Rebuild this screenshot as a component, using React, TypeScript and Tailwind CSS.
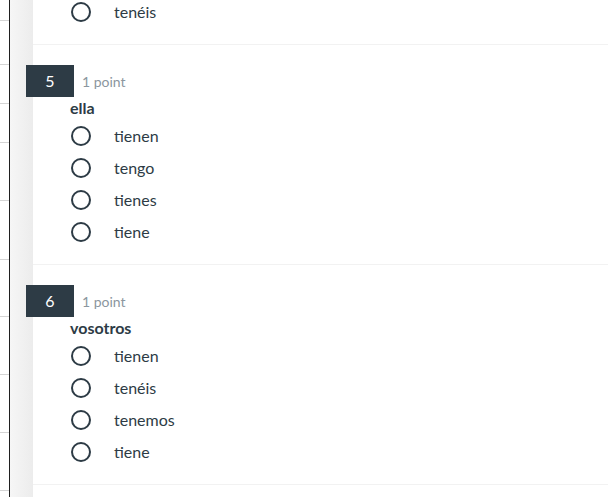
import React from 'react';

interface Question {
  num: number;
  title: string;
  options: string[];
}

const questions: Question[] = [
  { num: 5, title: 'ella', options: ['tienen', 'tengo', 'tienes', 'tiene'] },
  { num: 6, title: 'vosotros', options: ['tienen', 'tenéis', 'tenemos', 'tiene'] },
];

function Option({ label }: { label: string }) {
  return (
    <div className="flex h-8 items-center pl-[38px]">
      <span className="h-5 w-5 rounded-full border-2 border-[#2d3b45]"></span>
      <span className="ml-[23px] text-[16px] text-[#2d3b45]">{label}</span>
    </div>
  );
}

function QuestionBlock({ q }: { q: Question }) {
  return (
    <div className="border-b border-[#f2f2f2] pt-[20px] pb-4">
      <div className="flex items-center">
        <div className="-ml-[7px] flex h-8 w-12 items-center justify-center bg-[#2d3b45] text-[16px] text-white">
          {q.num}
        </div>
        <span className="ml-2 mt-px text-[14px] text-[#8b969e]">1 point</span>
      </div>
      <div className="flex h-[22px] items-center pl-[37px] text-[16px] font-bold text-[#2d3b45]">{q.title}</div>
      <div className="pt-px">
        {q.options.map((o) => (
          <Option key={o} label={o} />
        ))}
      </div>
    </div>
  );
}

export default function App() {
  const lines = [20, 64, 103, 142, 200, 259, 316, 374, 432, 490];
  return (
    <div className="flex h-[497px] w-[608px] overflow-hidden bg-white" style={{ fontFamily: 'Lato, "Open Sans", sans-serif' }}>
      {/* left nav sliver */}
      <div className="relative w-[9px] bg-white">
        {lines.map((y) => (
          <div key={y} className="absolute left-0 right-0 h-px bg-[#d4d4d4]" style={{ top: y }}></div>
        ))}
      </div>
      <div className="w-px bg-[#1f1f1f]"></div>
      <div className="w-[23px] bg-gradient-to-r from-[#f6f6f6] to-[#ececec]"></div>

      {/* quiz card */}
      <div className="flex-1 bg-white">
        <div className="-mt-1 border-b border-[#f2f2f2] pb-4">
          <Option label="tenéis" />
        </div>
        {questions.map((q) => (
          <QuestionBlock key={q.num} q={q} />
        ))}
      </div>
    </div>
  );
}
